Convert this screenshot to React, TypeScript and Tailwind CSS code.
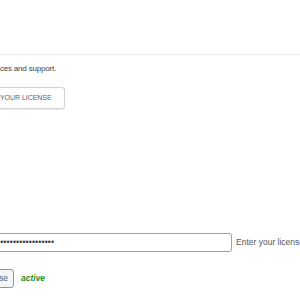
export default function App() {
  const font = { fontFamily: '"Liberation Sans", Arial, sans-serif' };
  return (
    <div className="w-[300px] h-[300px] overflow-hidden bg-white relative" style={font}>
      <div className="h-[54px] bg-white" />
      <div className="border-t border-[#ececec]" />
      <div className="pt-[9px]">
        <p className="text-[8px] leading-[10px] tracking-[-0.2px] text-[#3c434a] whitespace-nowrap">ces and support.</p>
        <div className="mt-[13px] flex">
          <button className="-ml-[11px] h-[22px] pl-[10px] pr-[12px] border border-[#d0d4d8] rounded-[3px] bg-white shadow-[0_1px_1px_rgba(0,0,0,0.08)] text-[7px] tracking-[-0.05px] text-[#50637a] whitespace-nowrap">
            YOUR LICENSE
          </button>
        </div>
        <div className="mt-[124px] flex items-center">
          <div className="-ml-[100px] w-[332px] h-[19px] border border-[#9ca1a6] rounded-[3px] bg-white flex items-center pl-[10px] shrink-0">
            <span className="text-[#2c3338] text-[8.5px] leading-none tracking-[0.2px] ml-[86px]">••••••••••••••••••</span>
          </div>
          <span className="ml-[4px] text-[8.5px] text-[#50575e] whitespace-nowrap">Enter your license key</span>
        </div>
        <div className="mt-[17px] flex items-center">
          <button className="-ml-[12px] h-[19px] pl-[10px] pr-[5px] border border-[#7a9bb5] rounded-[3px] bg-[#f3f5f7] text-[8.5px] text-[#50637a] whitespace-nowrap">
            se
          </button>
          <span className="ml-[7px] text-[8.5px] font-bold italic text-[#2a8a1a]">active</span>
        </div>
      </div>
    </div>
  );
}
